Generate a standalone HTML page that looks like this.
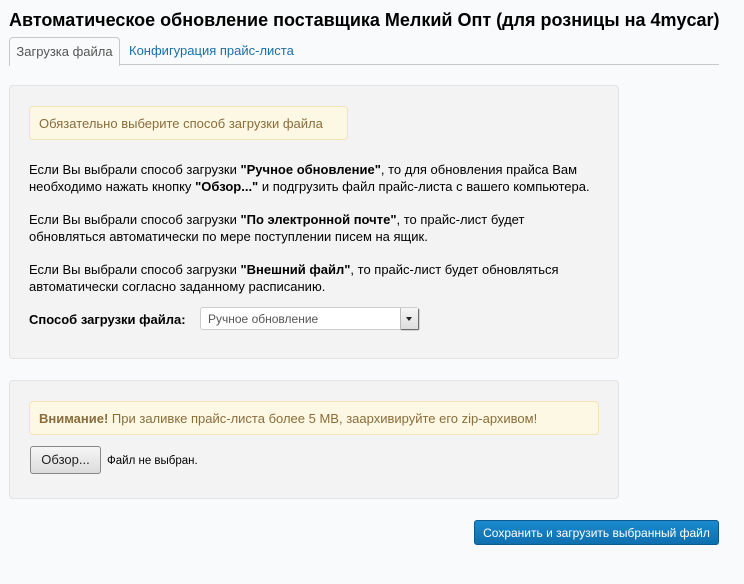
<!DOCTYPE html>
<html><head><meta charset="utf-8"><style>
body{margin:0;background:#f9fafb;font-family:"Liberation Sans",sans-serif;font-size:13px;color:#000;width:744px;height:584px;overflow:hidden;position:relative}
.a{position:absolute}
h1{position:absolute;left:9px;top:10px;margin:0;font-size:18px;font-weight:bold;white-space:nowrap}
.tabline{left:9px;top:64px;width:710px;height:1px;background:#c8c8c8}
.tab{left:9px;top:37px;width:109px;height:28px;border:1px solid #c8c8c8;border-bottom:none;border-radius:4px 4px 0 0;background:#f9fafb;color:#555;line-height:27px;text-align:center}
.tab2{left:129px;top:37px;line-height:28px;color:#1a6fa8}
.panel{background:#f3f3f3;border:1px solid #e3e3e3;border-radius:4px}
.alert{background:#fcf8e3;border:1px solid #f5e3b8;border-radius:4px;color:#8a6d3b;line-height:33px;padding-left:9px;box-sizing:border-box}
p{position:absolute;left:29px;margin:0;line-height:16.5px;width:570px}
.sel{left:200px;top:307px;width:219px;height:23px;box-sizing:border-box;border:1px solid #ccc;border-radius:3px;background:#fff;color:#555;font-size:12px;line-height:22px;padding-left:7px}
.arr{position:absolute;right:0;top:0;width:17px;height:21px;background:linear-gradient(#f6f6f6,#ddd);border-left:1px solid #bbb;box-shadow:1px 1px 1px #555}
.arr:after{content:"";position:absolute;left:5px;top:9px;border:3px solid transparent;border-top:4px solid #222}
.btn{left:30px;top:446px;width:71px;height:28px;box-sizing:border-box;border:1px solid #888;border-radius:3px;background:linear-gradient(#f6f6f6,#dcdcdc);text-align:center;line-height:26px;color:#222}
.save{left:474px;top:520px;width:245px;height:25px;box-sizing:border-box;border:1px solid #0b5a8c;border-radius:3px;background:linear-gradient(#1a8ad0,#0e6fae);color:#fff;text-align:center;line-height:24px;font-size:12px}
</style></head><body>
<h1>Автоматическое обновление поставщика Мелкий Опт (для розницы на 4mycar)</h1>
<div class="a tabline"></div>
<div class="a tab">Загрузка файла</div>
<div class="a tab2">Конфигурация прайс-листа</div>
<div class="a panel" style="left:9px;top:85px;width:608px;height:272px"></div>
<div class="a alert" style="left:29px;top:106px;width:319px;height:34px">Обязательно выберите способ загрузки файла</div>
<p style="top:162px">Если Вы выбрали способ загрузки <b>"Ручное обновление"</b>, то для обновления прайса Вам необходимо нажать кнопку <b>"Обзор..."</b> и подгрузить файл прайс-листа с вашего компьютера.</p>
<p style="top:212px">Если Вы выбрали способ загрузки <b>"По электронной почте"</b>, то прайс-лист будет обновляться автоматически по мере поступлении писем на ящик.</p>
<p style="top:262px">Если Вы выбрали способ загрузки <b>"Внешний файл"</b>, то прайс-лист будет обновляться автоматически согласно заданному расписанию.</p>
<div class="a" style="left:29px;top:312px;font-weight:bold">Способ загрузки файла:</div>
<div class="a sel">Ручное обновление<div class="arr"></div></div>
<div class="a panel" style="left:9px;top:380px;width:608px;height:117px"></div>
<div class="a alert" style="left:29px;top:401px;width:570px;height:34px"><b>Внимание!</b> При заливке прайс-листа более 5 MB, заархивируйте его zip-архивом!</div>
<div class="a btn">Обзор...</div>
<div class="a" style="left:107px;top:455px;font-size:11.5px">Файл не выбран.</div>
<div class="a save">Сохранить и загрузить выбранный файл</div>
</body></html>
